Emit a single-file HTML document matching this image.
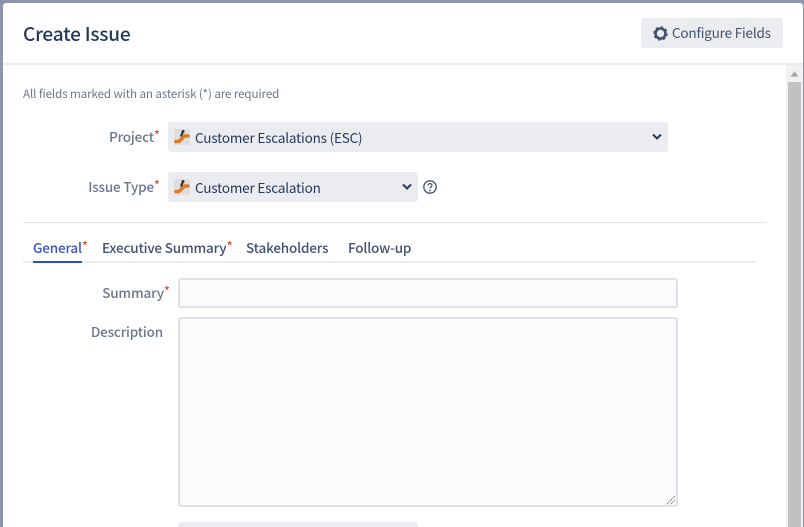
<!DOCTYPE html>
<html><head><meta charset="utf-8"><style>
html,body{margin:0;padding:0}
body{width:804px;height:527px;overflow:hidden;position:relative;background:#8c95ab;font-family:"Noto Sans CJK JP","Liberation Sans",sans-serif;font-size:13.5px;letter-spacing:-.18px;color:#344563}
div,svg{position:absolute;box-sizing:border-box}
.t{white-space:nowrap;line-height:20px;height:20px}
.lab{color:#6b778c;font-weight:500;text-align:right}
.tab{font-weight:500;color:#42526e}
sup{font-size:13px;line-height:0;color:#de350b;vertical-align:2px;font-weight:400;letter-spacing:0;margin-left:0}
.sel{background:#ebecf0;border-radius:3px}
.inp{background:#fafbfc;border:2px solid #dfe1e6;border-radius:3px}
</style></head><body>
<div style="left:3px;top:3px;width:800px;height:524px;background:#fff;border-radius:3px 3px 0 0"></div>
<div class="t" style="left:23px;top:20px;height:28px;line-height:28px;font-size:19px;letter-spacing:-.2px;font-weight:500;color:#253858">Create Issue</div>
<div style="left:3px;top:63px;width:800px;height:2px;background:#ebecf0"></div>
<div style="left:641px;top:18px;width:142px;height:30px;background:#ebecf0;border-radius:3px"></div>
<svg style="left:653px;top:26px" width="15" height="15" viewBox="0 0 15 15"><circle cx="7.500" cy="7.500" r="5" fill="none" stroke="#42526e" stroke-width="2.600"/><circle cx="7.500" cy="7.500" r="6.400" fill="none" stroke="#42526e" stroke-width="1.600" stroke-dasharray="2.500 2.500"/></svg>
<div class="t" style="left:672px;top:22px;color:#42526e">Configure Fields</div>
<div style="left:786px;top:65px;width:17px;height:462px;background:#f1f1f1"></div>
<div style="left:788px;top:82px;width:13px;height:445px;background:#c1c1c1"></div>
<svg style="left:790px;top:71px" width="9" height="6" viewBox="0 0 9 6"><path d="M0.500 5.500L4.500 0.500L8.500 5.500Z" fill="#a3a3a3"/></svg>
<div class="t" style="left:23px;top:84px;font-size:11.6px;letter-spacing:-.1px;color:#6b778c">All fields marked with an asterisk (*) are required</div>
<div class="t lab" style="left:60px;width:100px;top:126px">Project<sup>*</sup></div>
<div class="sel" style="left:168px;top:122px;width:500px;height:30px"></div>
<div style="left:174px;top:129px;width:16px;height:16px;background:#dedede"></div>
<svg style="left:174px;top:129px" width="16" height="16" viewBox="0 0 16 16"><path d="M2 12.500H5L10.500 7H14" fill="none" stroke="#dd7a26" stroke-width="3.600" stroke-linecap="round"/><circle cx="9" cy="2.500" r="1.500" fill="#333"/><path d="M8.500 3.500L7 7.500" stroke="#333" stroke-width="2.200"/></svg>
<div class="t" style="left:195px;top:127px;color:#253858">Customer Escalations (ESC)</div>
<svg style="left:652px;top:133px" width="10" height="8" viewBox="0 0 10 8"><path d="M1 1.500L5 5.500L9 1.500" fill="none" stroke="#253858" stroke-width="2"/></svg>
<div class="t lab" style="left:40px;width:120px;top:176px">Issue Type<sup>*</sup></div>
<div class="sel" style="left:168px;top:172px;width:250px;height:30px"></div>
<div style="left:174px;top:179px;width:16px;height:16px;background:#dedede"></div>
<svg style="left:174px;top:179px" width="16" height="16" viewBox="0 0 16 16"><path d="M2 12.500H5L10.500 7H14" fill="none" stroke="#dd7a26" stroke-width="3.600" stroke-linecap="round"/><circle cx="9" cy="2.500" r="1.500" fill="#333"/><path d="M8.500 3.500L7 7.500" stroke="#333" stroke-width="2.200"/></svg>
<div class="t" style="left:195px;top:177px;color:#253858">Customer Escalation</div>
<svg style="left:402px;top:183px" width="10" height="8" viewBox="0 0 10 8"><path d="M1 1.500L5 5.500L9 1.500" fill="none" stroke="#253858" stroke-width="2"/></svg>
<svg style="left:423px;top:180px" width="14" height="14" viewBox="0 0 14 14"><circle cx="7" cy="7" r="6.200" fill="none" stroke="#42526e" stroke-width="1.300"/><path d="M5 5.500C5 3 9 3 9 5.500C9 7 7 7 7 8.500" fill="none" stroke="#42526e" stroke-width="1.300"/><circle cx="7" cy="10.500" r=".9" fill="#42526e"/></svg>
<div style="left:23px;top:222px;width:743px;height:1px;background:#dfe1e6"></div>
<div style="left:23px;top:261px;width:733px;height:2px;background:#ebecf0"></div>
<div style="left:33px;top:261px;width:49px;height:2px;background:#2a50c8"></div>
<div class="t tab" style="left:33px;top:237px;color:#3b52c4">General<sup>*</sup></div>
<div class="t tab" style="left:102px;top:237px">Executive Summary<sup>*</sup></div>
<div class="t tab" style="left:246px;top:237px">Stakeholders</div>
<div class="t tab" style="left:348px;top:237px">Follow-up</div>
<div class="t lab" style="left:60px;width:110px;top:282px">Summary<sup>*</sup></div>
<div class="inp" style="left:178px;top:278px;width:500px;height:30px"></div>
<div class="t lab" style="left:60px;width:103px;top:321px">Description</div>
<div class="inp" style="left:178px;top:317px;width:500px;height:190px"></div>
<svg style="left:666px;top:495px" width="10" height="10" viewBox="0 0 10 10"><path d="M1 9L9 1M5 9L9 5" stroke="#555" stroke-width="1" stroke-dasharray="1 1"/></svg>
<div class="sel" style="left:178px;top:522px;width:240px;height:5px;border-radius:3px 3px 0 0"></div>
</body></html>
